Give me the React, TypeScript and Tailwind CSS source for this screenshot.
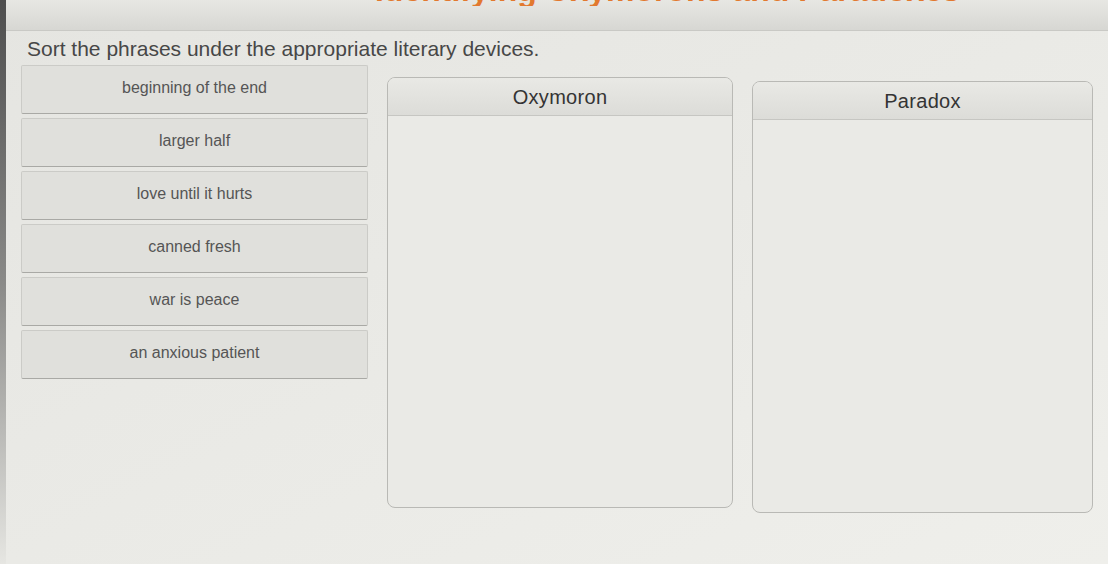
const phrases = [
  "beginning of the end",
  "larger half",
  "love until it hurts",
  "canned fresh",
  "war is peace",
  "an anxious patient",
];

function DropColumn({ title, className }: { title: string; className: string }) {
  return (
    <div
      className={
        "flex flex-col rounded-[8px] border border-[#b9b9b5] bg-[#eaeae6] overflow-hidden " +
        className
      }
    >
      <div className="h-[38px] shrink-0 flex items-center justify-center border-b border-[#c6c6c2] bg-gradient-to-b from-[#e9e9e5] to-[#dcdcd8]">
        <span className="text-[20px] text-[#343434] tracking-[0.3px]">{title}</span>
      </div>
      <div className="flex-1" />
    </div>
  );
}

export default function App() {
  return (
    <div
      className="w-[1108px] h-[564px] flex overflow-hidden bg-gradient-to-br from-[#e5e5e1] via-[#eaeae6] to-[#efefeb]"
      style={{ fontFamily: '"Liberation Sans", Arial, sans-serif' }}
    >
      {/* bezel edge on the left */}
      <div className="w-[6px] shrink-0 bg-gradient-to-b from-[#4e4e4e] via-[#8a8a88] to-[#e6e6e2]" />

      <div className="flex-1 flex flex-col">
        {/* lesson header band, its title mostly scrolled out of view */}
        <div className="h-[31px] shrink-0 flex flex-col bg-gradient-to-b from-[#e7e7e3] to-[#d7d7d3] border-b border-[#c9c9c5]">
          <div className="h-[6px] overflow-hidden flex items-end justify-end pr-[148px]">
            <span className="text-[32px] leading-none font-bold text-[#e2792f] whitespace-nowrap">
              Identifying Oxymorons and Paradoxes
            </span>
          </div>
        </div>

        <h1 className="mt-[6px] ml-[21px] text-[21px] leading-[24px] text-[#474747]">
          Sort the phrases under the appropriate literary devices.
        </h1>

        <div className="mt-[4px] ml-[15px] flex items-start gap-[19px]">
          {/* draggable phrase cards */}
          <div className="w-[347px] flex flex-col gap-[4px]">
            {phrases.map((p) => (
              <div
                key={p}
                className="h-[49px] flex items-center justify-center rounded-[2px] border border-[#cbcbc7] border-b-[#a9a9a5] bg-[#e0e0dc] pb-[3px]"
              >
                <span className="text-[16px] text-[#555555]">{p}</span>
              </div>
            ))}
          </div>

          <DropColumn title="Oxymoron" className="w-[346px] h-[431px] mt-[12px]" />
          <DropColumn title="Paradox" className="w-[341px] h-[432px] mt-[16px]" />
        </div>
      </div>
    </div>
  );
}
